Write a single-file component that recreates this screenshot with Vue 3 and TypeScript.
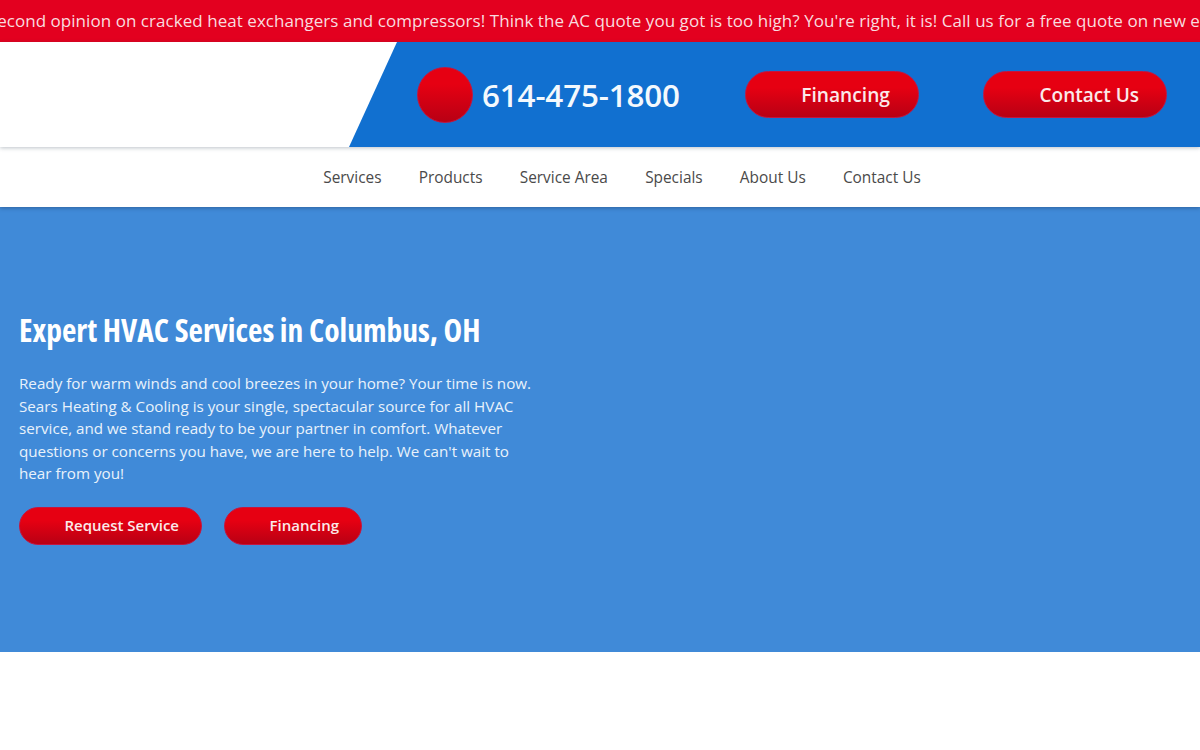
<script setup lang="ts">
const navItems: string[] = ['Services', 'Products', 'Service Area', 'Specials', 'About Us', 'Contact Us']
const ticker = "We offer a free second opinion on cracked heat exchangers and compressors! Think the AC quote you got is too high? You're right, it is! Call us for a free quote on new equipment today!"
</script>

<template>
  <div class="page">
    <div class="ticker"><span class="ticker-text">{{ ticker }}</span></div>
    <header class="header">
      <div class="panel">
        <div class="phone">
          <span class="phone-dot"></span>
          <span class="phone-num">614-475-1800</span>
        </div>
        <a class="btn btn-lg btn-fin">Financing</a>
        <a class="btn btn-lg btn-con">Contact Us</a>
      </div>
    </header>
    <nav class="nav">
      <a v-for="item in navItems" :key="item" class="nav-item">{{ item }}</a>
    </nav>
    <section class="hero">
      <h1 class="title">Expert HVAC Services in Columbus, OH</h1>
      <p class="copy">Ready for warm winds and cool breezes in your home? Your time is now. Sears Heating &amp; Cooling is your single, spectacular source for all HVAC service, and we stand ready to be your partner in comfort. Whatever questions or concerns you have, we are here to help. We can't wait to hear from you!</p>
      <div class="actions">
        <a class="btn btn-sm btn-req">Request Service</a>
        <a class="btn btn-sm btn-fin2">Financing</a>
      </div>
    </section>
  </div>
</template>

<style>
html, body { margin: 0; background: #fff; }
</style>

<style scoped>
.page {
  width: 1200px;
  height: 750px;
  overflow: hidden;
  background: #fff;
  font-family: "Open Sans", "Noto Sans", sans-serif;
}
.ticker {
  height: 42px;
  background: #e3001f;
  color: #f9dcdf;
  font-size: 17px;
  letter-spacing: 0.045px;
  line-height: 42px;
  white-space: nowrap;
  overflow: hidden;
}
.ticker-text {
  display: inline-block;
  margin-left: -134px;
}
.header {
  height: 105px;
  display: flex;
  justify-content: flex-end;
  background: #fff;
  position: relative;
  z-index: 2;
  box-shadow: 0 1px 4px rgba(40, 60, 80, 0.3);
}
.panel {
  width: 851px;
  box-sizing: border-box;
  background: #1170d0;
  clip-path: polygon(48px 0, 100% 0, 100% 100%, 0 100%);
  display: flex;
  align-items: center;
  padding-left: 68px;
}
.phone {
  display: flex;
  align-items: center;
  gap: 9px;
  width: 328px;
}
.phone-dot {
  width: 56px;
  height: 56px;
  border-radius: 50%;
  background: linear-gradient(#e60012 30%, #b80014);
  box-sizing: border-box;
  border: 1px solid #c4153f;
}
.phone-num {
  color: #f4f9fd;
  font-size: 31.4px;
  font-weight: 600;
  letter-spacing: -0.15px;
}
.btn {
  display: flex;
  align-items: center;
  justify-content: flex-end;
  box-sizing: border-box;
  border-radius: 999px;
  background: linear-gradient(#e60012 35%, #b80014);
  border: 1px solid #c4153f;
  color: #fbe9ea;
  font-weight: 600;
}
.btn-lg {
  height: 47px;
  font-size: 19.2px;
}
.btn-fin { width: 174px; padding-right: 28px; margin-right: 64px; }
.btn-con { width: 184px; padding-right: 27px; font-size: 19px; }
.nav {
  height: 60px;
  box-sizing: border-box;
  display: flex;
  align-items: center;
  justify-content: center;
  gap: 37.2px;
  padding-left: 44px;
  background: #fff;
  position: relative;
  z-index: 1;
  box-shadow: 0 1px 4px rgba(20, 40, 70, 0.4);
}
.nav-item {
  color: #4a4a4a;
  font-size: 15.4px;
}
.hero {
  height: 445px;
  box-sizing: border-box;
  background: #408ad8;
  padding: 103px 0 0 19px;
}
.title {
  margin: 0 0 22px;
  color: #fff;
  font-size: 31.5px;
  font-weight: 700;
  line-height: 40px;
  font-stretch: 75%;
  white-space: nowrap;
}
.copy {
  margin: 0;
  width: 520px;
  color: #e9f2fb;
  font-size: 15.2px;
  line-height: 22.5px;
}
.actions {
  display: flex;
  gap: 22px;
  margin-top: 22px;
}
.btn-sm {
  height: 38px;
  font-size: 15px;
  padding-bottom: 2px;
}
.btn-req { width: 183px; padding-right: 22px; }
.btn-fin2 { width: 138px; padding-right: 22px; }
</style>
